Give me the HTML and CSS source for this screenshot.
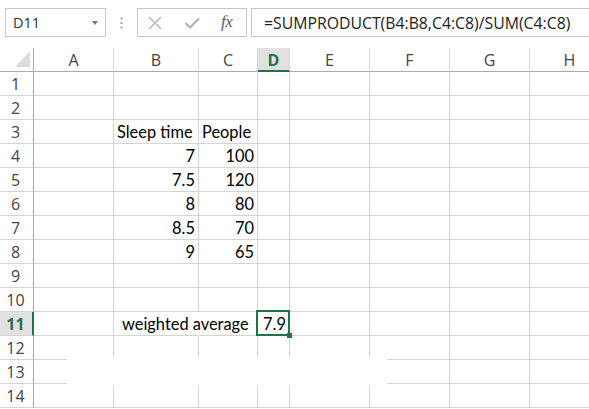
FILE: index.html
```html
<!DOCTYPE html>
<html>
<head>
<meta charset="utf-8">
<link rel="stylesheet" href="styles.css">
</head>
<body>
<div class="fbar">
  <div class="namebox"><span class="nb-text">D11</span><span class="nb-arrow"></span></div>
  <div class="grip"><svg width="3" height="12" viewBox="0 0 3 12"><rect x="0.5" y="0.5" width="2" height="2" fill="#a6a6a6"/><rect x="0.5" y="5" width="2" height="2" fill="#a6a6a6"/><rect x="0.5" y="9.5" width="2" height="2" fill="#a6a6a6"/></svg></div>
  <div class="fbox">
    <svg class="ic-x" width="14" height="14" viewBox="0 0 14 14"><path d="M1 1 L13 13 M13 1 L1 13" stroke="#b4b4b4" stroke-width="1.4" fill="none"/></svg>
    <svg class="ic-ok" width="16" height="12" viewBox="0 0 16 12"><path d="M1.5 6 L6 10.5 L15 1.5" stroke="#b4b4b4" stroke-width="2.2" fill="none"/></svg>
    <span class="fx">fx</span>
  </div>
  <div class="finput">=SUMPRODUCT(B4:B8,C4:C8)/SUM(C4:C8)</div>
</div>

<div class="sheet">
  <div class="grid">
    <div class="corner"><span class="tri"></span></div>
    <div class="ch">A</div><div class="ch">B</div><div class="ch">C</div><div class="ch sel">D</div><div class="ch">E</div><div class="ch">F</div><div class="ch">G</div><div class="ch">H</div>

    <div class="rh">1</div><div class="c"></div><div class="c"></div><div class="c"></div><div class="c"></div><div class="c"></div><div class="c"></div><div class="c"></div><div class="c"></div>
    <div class="rh">2</div><div class="c"></div><div class="c"></div><div class="c"></div><div class="c"></div><div class="c"></div><div class="c"></div><div class="c"></div><div class="c"></div>
    <div class="rh">3</div><div class="c"></div><div class="c txt">Sleep time</div><div class="c txt">People</div><div class="c"></div><div class="c"></div><div class="c"></div><div class="c"></div><div class="c"></div>
    <div class="rh">4</div><div class="c"></div><div class="c num">7</div><div class="c num">100</div><div class="c"></div><div class="c"></div><div class="c"></div><div class="c"></div><div class="c"></div>
    <div class="rh">5</div><div class="c"></div><div class="c num">7.5</div><div class="c num">120</div><div class="c"></div><div class="c"></div><div class="c"></div><div class="c"></div><div class="c"></div>
    <div class="rh">6</div><div class="c"></div><div class="c num">8</div><div class="c num">80</div><div class="c"></div><div class="c"></div><div class="c"></div><div class="c"></div><div class="c"></div>
    <div class="rh">7</div><div class="c"></div><div class="c num">8.5</div><div class="c num">70</div><div class="c"></div><div class="c"></div><div class="c"></div><div class="c"></div><div class="c"></div>
    <div class="rh">8</div><div class="c"></div><div class="c num">9</div><div class="c num">65</div><div class="c"></div><div class="c"></div><div class="c"></div><div class="c"></div><div class="c"></div>
    <div class="rh">9</div><div class="c"></div><div class="c"></div><div class="c"></div><div class="c"></div><div class="c"></div><div class="c"></div><div class="c"></div><div class="c"></div>
    <div class="rh">10</div><div class="c"></div><div class="c"></div><div class="c"></div><div class="c"></div><div class="c"></div><div class="c"></div><div class="c"></div><div class="c"></div>
    <div class="rh rsel">11</div><div class="c"></div><div class="c txt spill"><span class="spill-text">weighted average</span></div><div class="c"></div><div class="c num active">7.9</div><div class="c"></div><div class="c"></div><div class="c"></div><div class="c"></div>
    <div class="rh">12</div><div class="c"></div><div class="c"></div><div class="c"></div><div class="c"></div><div class="c"></div><div class="c"></div><div class="c"></div><div class="c"></div>
    <div class="rh">13</div><div class="c"></div><div class="c"></div><div class="c"></div><div class="c"></div><div class="c"></div><div class="c"></div><div class="c"></div><div class="c"></div>
    <div class="rh">14</div><div class="c"></div><div class="c"></div><div class="c"></div><div class="c"></div><div class="c"></div><div class="c"></div><div class="c"></div><div class="c"></div>
  </div>
  <div class="patch"></div>
</div>
</body>
</html>
```

FILE: styles.css
```css
html, body {
  margin: 0;
  padding: 0;
  background: #fff;
  overflow: hidden;
}
body {
  width: 589px;
  height: 409px;
  font-family: "Open Sans", "Noto Sans", sans-serif;
}

/* formula bar */
.fbar {
  height: 48px;
  box-sizing: border-box;
  padding: 8px 0 0 5px;
  display: flex;
  align-items: flex-start;
}
.namebox {
  width: 101px;
  height: 29px;
  box-sizing: border-box;
  border: 1px solid #c6c6c6;
  display: flex;
  align-items: center;
  justify-content: space-between;
  padding: 0 7px 0 7px;
}
.nb-text {
  font-size: 14.5px;
  color: #333;
}
.nb-arrow {
  width: 0;
  height: 0;
  border-left: 3.5px solid transparent;
  border-right: 3.5px solid transparent;
  border-top: 4px solid #7a7a7a;
  margin-top: 1px;
}
.grip {
  width: 31px;
  height: 29px;
  display: flex;
  align-items: center;
  justify-content: center;
}
.fbox {
  width: 110px;
  height: 29px;
  box-sizing: border-box;
  border: 1px solid #c6c6c6;
  display: flex;
  align-items: center;
  padding-left: 10px;
}
.ic-x { margin-right: 22px; }
.ic-ok { margin-right: 21px; margin-top: 1px; }
.fx {
  font-family: "Liberation Serif", serif;
  font-style: italic;
  font-size: 17px;
  color: #5e5e5e;
  letter-spacing: -0.5px;
  margin-top: -2px;
}
.finput {
  margin-left: 4px;
  flex: 1;
  height: 29px;
  box-sizing: border-box;
  border: 1px solid #c6c6c6;
  border-right: none;
  display: flex;
  align-items: center;
  padding-left: 12px;
  font-size: 15.8px;
  color: #222;
  white-space: nowrap;
  overflow: hidden;
}

/* sheet */
.sheet {
  position: relative;
}
.grid {
  display: grid;
  grid-template-columns: 34px 80px 85px 59px 32px 80px 80px 80px 80px;
  grid-auto-rows: 24px;
  width: 610px;
}
.grid > div {
  box-sizing: border-box;
}
.corner {
  border-right: 1px solid #ababab;
  border-bottom: 1px solid #ababab;
  display: flex;
  align-items: flex-end;
  justify-content: flex-end;
  padding: 0 3px 4px 0;
}
.tri {
  width: 0;
  height: 0;
  border-left: 15px solid transparent;
  border-bottom: 16px solid #dcdcdc;
}
.ch {
  border-right: 1px solid #dadada;
  border-bottom: 1px solid #ababab;
  display: flex;
  align-items: center;
  justify-content: center;
  font-size: 16px;
  color: #444;
  padding-top: 1px;
}
.ch.sel {
  background: #e1e1e1;
  border-bottom: 2px solid #217346;
  color: #217346;
  font-weight: bold;
  padding-top: 2px;
}
.rh {
  border-right: 1px solid #ababab;
  border-bottom: 1px solid #d4d4d4;
  display: flex;
  align-items: center;
  justify-content: center;
  font-size: 16px;
  color: #444;
  padding-right: 2px;
}
.rh.rsel {
  background: #e1e1e1;
  border-right: 2px solid #217346;
  color: #217346;
  font-weight: bold;
  padding-right: 1px;
}
.c {
  border-right: 1px solid #d4d4d4;
  border-bottom: 1px solid #d4d4d4;
  font-family: "Lato", "Open Sans", sans-serif;
  font-size: 16.4px;
  color: #000;
  display: flex;
  align-items: flex-end;
  padding-bottom: 2px;
  white-space: nowrap;
  line-height: 18px;
}
.txt {
  padding-left: 3px;
}
.num {
  justify-content: flex-end;
  padding-right: 3px;
}
.spill {
  border-right-color: transparent;
  overflow: visible;
  padding-left: 8px;
}
.spill-text {
  position: relative;
  z-index: 1;
}
.active {
  position: relative;
}
.active::after {
  content: "";
  position: absolute;
  left: -2px;
  top: -2px;
  right: -1px;
  bottom: -1px;
  border: 2px solid #217346;
}
.active::before {
  content: "";
  position: absolute;
  right: -3px;
  bottom: -3px;
  width: 5px;
  height: 5px;
  background: #217346;
  z-index: 2;
}
.patch {
  position: absolute;
  left: 67px;
  top: 309px;
  width: 320px;
  height: 28px;
  background: #fff;
}
```
